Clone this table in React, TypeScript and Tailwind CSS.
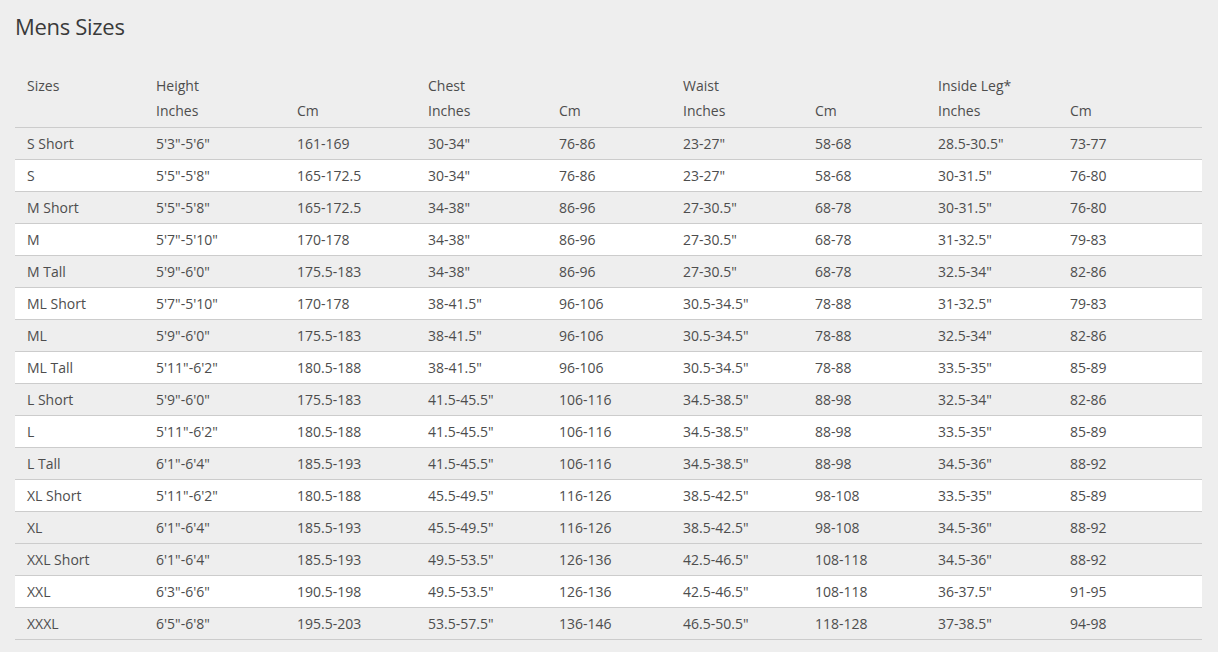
const cols = "grid grid-cols-[129px_141px_131px_131px_124px_132px_123px_132px_144px]";

const rows: string[][] = [
  ["S Short", "5'3\"-5'6\"", "161-169", "30-34\"", "76-86", "23-27\"", "58-68", "28.5-30.5\"", "73-77"],
  ["S", "5'5\"-5'8\"", "165-172.5", "30-34\"", "76-86", "23-27\"", "58-68", "30-31.5\"", "76-80"],
  ["M Short", "5'5\"-5'8\"", "165-172.5", "34-38\"", "86-96", "27-30.5\"", "68-78", "30-31.5\"", "76-80"],
  ["M", "5'7\"-5'10\"", "170-178", "34-38\"", "86-96", "27-30.5\"", "68-78", "31-32.5\"", "79-83"],
  ["M Tall", "5'9\"-6'0\"", "175.5-183", "34-38\"", "86-96", "27-30.5\"", "68-78", "32.5-34\"", "82-86"],
  ["ML Short", "5'7\"-5'10\"", "170-178", "38-41.5\"", "96-106", "30.5-34.5\"", "78-88", "31-32.5\"", "79-83"],
  ["ML", "5'9\"-6'0\"", "175.5-183", "38-41.5\"", "96-106", "30.5-34.5\"", "78-88", "32.5-34\"", "82-86"],
  ["ML Tall", "5'11\"-6'2\"", "180.5-188", "38-41.5\"", "96-106", "30.5-34.5\"", "78-88", "33.5-35\"", "85-89"],
  ["L Short", "5'9\"-6'0\"", "175.5-183", "41.5-45.5\"", "106-116", "34.5-38.5\"", "88-98", "32.5-34\"", "82-86"],
  ["L", "5'11\"-6'2\"", "180.5-188", "41.5-45.5\"", "106-116", "34.5-38.5\"", "88-98", "33.5-35\"", "85-89"],
  ["L Tall", "6'1\"-6'4\"", "185.5-193", "41.5-45.5\"", "106-116", "34.5-38.5\"", "88-98", "34.5-36\"", "88-92"],
  ["XL Short", "5'11\"-6'2\"", "180.5-188", "45.5-49.5\"", "116-126", "38.5-42.5\"", "98-108", "33.5-35\"", "85-89"],
  ["XL", "6'1\"-6'4\"", "185.5-193", "45.5-49.5\"", "116-126", "38.5-42.5\"", "98-108", "34.5-36\"", "88-92"],
  ["XXL Short", "6'1\"-6'4\"", "185.5-193", "49.5-53.5\"", "126-136", "42.5-46.5\"", "108-118", "34.5-36\"", "88-92"],
  ["XXL", "6'3\"-6'6\"", "190.5-198", "49.5-53.5\"", "126-136", "42.5-46.5\"", "108-118", "36-37.5\"", "91-95"],
  ["XXXL", "6'5\"-6'8\"", "195.5-203", "53.5-57.5\"", "136-146", "46.5-50.5\"", "118-128", "37-38.5\"", "94-98"],
];

const whiteRows = [1, 3, 5, 7, 9, 11, 14];

const groups = ["Sizes", "Height", "", "Chest", "", "Waist", "", "Inside Leg*", ""];
const units = ["", "Inches", "Cm", "Inches", "Cm", "Inches", "Cm", "Inches", "Cm"];

export default function App() {
  return (
    <div className="min-h-[652px] w-[1218px] bg-[#eeeeee] px-[15px] pt-[12px] font-['Open_Sans',sans-serif] text-[14px] text-[#4d4d4d]">
      <h1 className="text-[22px] leading-[28px] tracking-[-0.3px] text-[#3a3a3a]">Mens Sizes</h1>
      <div className="mt-[35px] w-[1187px]">
        <div className={`${cols} h-[22px] items-center`}>
          {groups.map((g, i) => (
            <div key={i} className="px-3 leading-[20px]">{g}</div>
          ))}
        </div>
        <div className={`${cols} h-[31px] items-start border-b border-[#cccccc]`}>
          {units.map((u, i) => (
            <div key={i} className="px-3 leading-[20px] pt-[4px]">{u}</div>
          ))}
        </div>
        {rows.map((r, ri) => (
          <div
            key={ri}
            className={`${cols} h-[32px] items-center border-b border-[#cccccc] ${whiteRows.includes(ri) ? "bg-white" : ""}`}
          >
            {r.map((c, ci) => (
              <div key={ci} className="px-3 leading-[20px] whitespace-nowrap">{c}</div>
            ))}
          </div>
        ))}
      </div>
    </div>
  );
}
